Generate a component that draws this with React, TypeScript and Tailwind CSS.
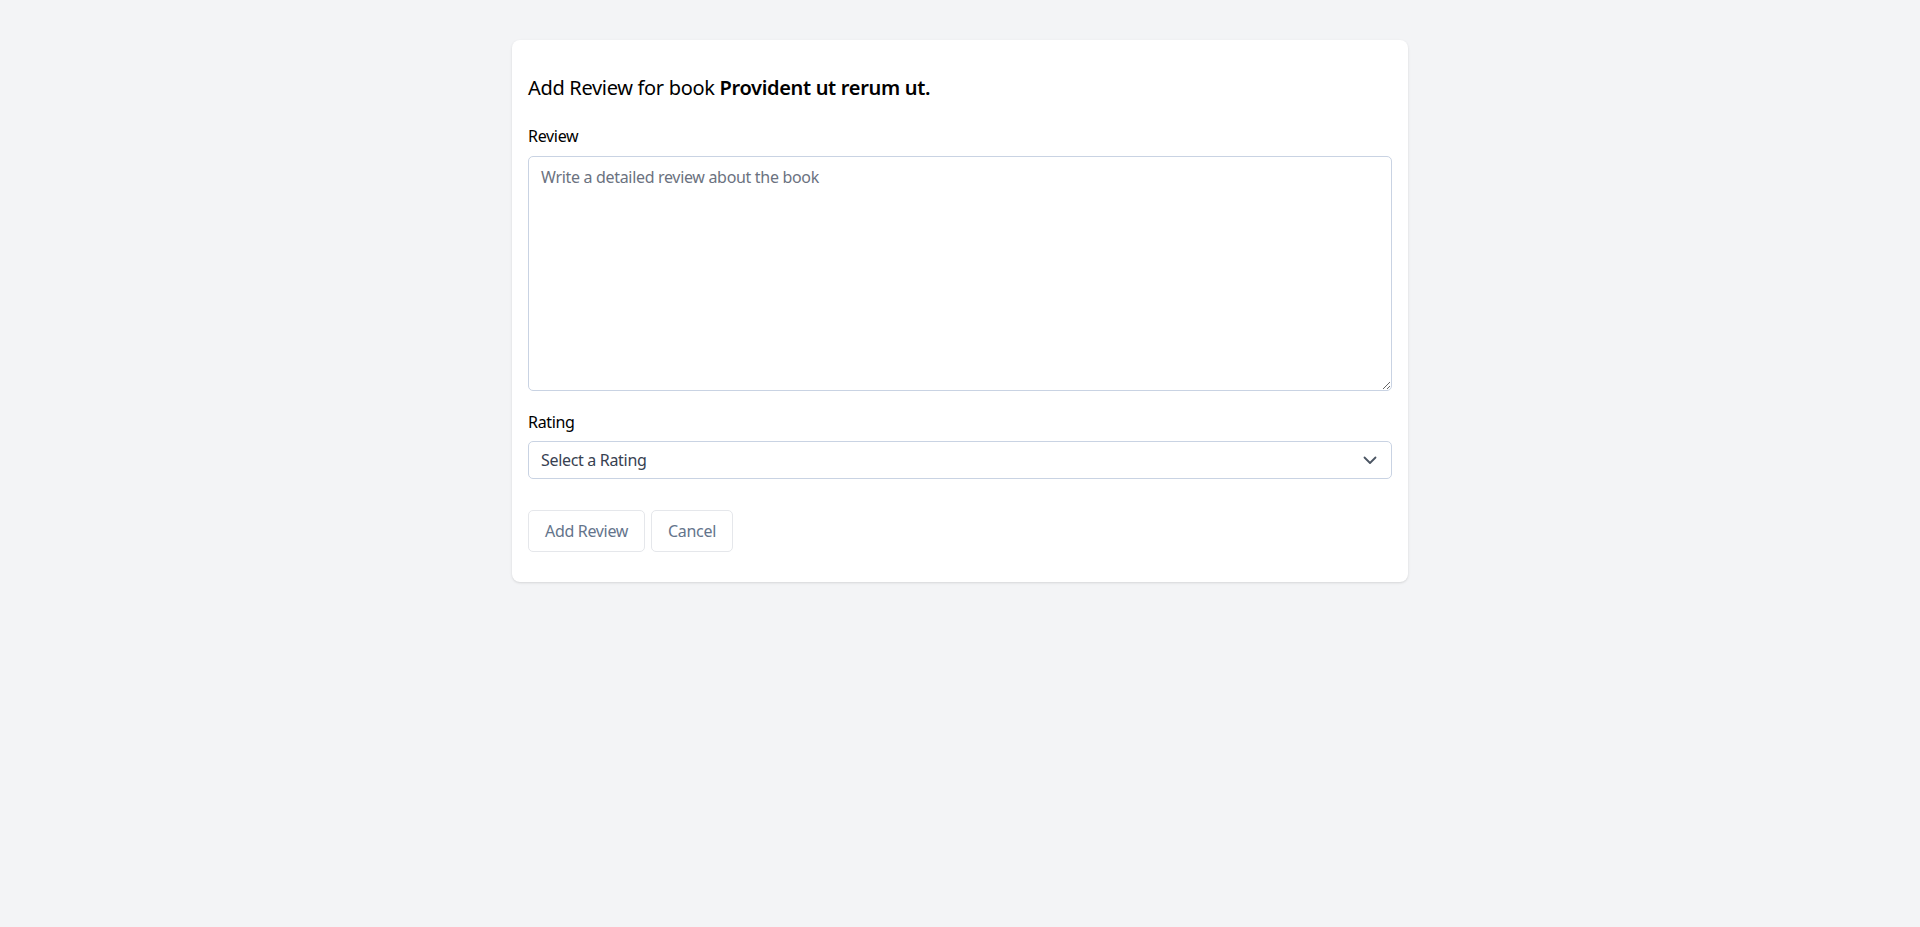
import React from 'react';

const ChevronDown: React.FC = () => (
  <svg width="24" height="24" viewBox="0 0 24 24" fill="none" className="text-[#4b5563]">
    <path d="M6.5 9.5l5.5 5.5 5.5-5.5" stroke="currentColor" strokeWidth="1.8" strokeLinecap="round" strokeLinejoin="round" />
  </svg>
);

const App: React.FC = () => {
  return (
    <div className="min-h-screen bg-[#f3f4f6] pt-10 tracking-[-0.02em]" style={{ fontFamily: '"Noto Sans", "Open Sans", sans-serif' }}>
      <div className="mx-auto w-[896px] bg-white rounded-lg shadow-sm px-4 pt-[34px] pb-[30px]">
        <h1 className="text-xl leading-7 text-black">
          Add Review for book <span className="font-semibold">Provident ut rerum ut.</span>
        </h1>

        <label className="block mt-[22px] mb-2 text-base leading-6 text-black">Review</label>
        <textarea
          className="block w-full h-[235px] rounded-[5px] border border-[#c9d3e3] px-3 py-2 text-base text-gray-700 placeholder:text-[#6b7280] outline-none"
          placeholder="Write a detailed review about the book"
        />

        <label className="block mt-[19px] mb-[7px] text-base leading-6 text-black">Rating</label>
        <div className="relative">
          <select className="block w-full h-[38px] appearance-none rounded-[5px] border border-[#c9d3e3] bg-white px-3 text-base text-[#374151] outline-none">
            <option>Select a Rating</option>
            <option>1</option>
            <option>2</option>
            <option>3</option>
            <option>4</option>
            <option>5</option>
          </select>
          <span className="pointer-events-none absolute right-[10px] top-1/2 -translate-y-1/2 flex">
            <ChevronDown />
          </span>
        </div>

        <div className="flex gap-[6px] mt-[31px]">
          <button className="h-[42px] px-4 rounded-[5px] border border-gray-200 text-base text-[#64748b]">Add Review</button>
          <button className="h-[42px] px-4 rounded-[5px] border border-gray-200 text-base text-[#64748b]">Cancel</button>
        </div>
      </div>
    </div>
  );
};

export default App;
